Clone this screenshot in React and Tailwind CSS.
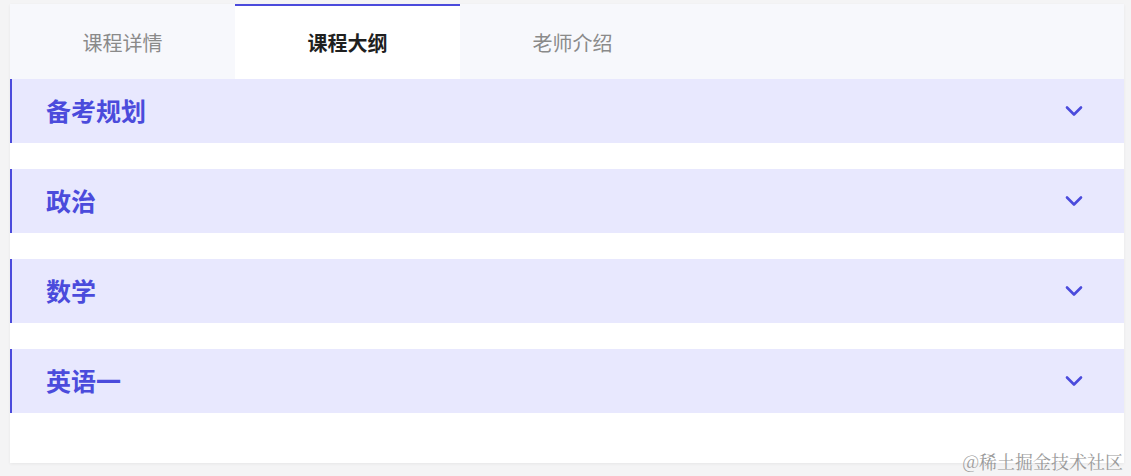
import React, { useState } from 'react'

const tabs = ['课程详情', '课程大纲', '老师介绍']
const sections = ['备考规划', '政治', '数学', '英语一']

function Chevron() {
  return (
    <svg width="18" height="12" viewBox="0 0 18 12" fill="none" stroke="#4b4bdc" strokeWidth="2.6" strokeLinecap="round" strokeLinejoin="round">
      <path d="M2 2.5l7 7 7-7" />
    </svg>
  )
}

export default function App() {
  const [active, setActive] = useState(1)

  return (
    <div
      className="relative w-[1131px] h-[476px] bg-[#f4f4f5] pt-[4px] pl-[10px] overflow-hidden"
      style={{ fontFamily: '"Noto Sans CJK SC", "Noto Sans", sans-serif' }}
    >
      <div className="w-[1114px] h-[459px] bg-white shadow-[0_1px_3px_rgba(0,0,0,0.06)]">
        <div className="flex h-[75px] bg-[#f7f8fc]">
          {tabs.map((t, i) => (
            <button
              key={t}
              onClick={() => setActive(i)}
              className={
                i === active
                  ? 'w-[225px] h-full bg-white border-t-2 border-[#4b4bdc] text-[20px] font-bold text-[#1f1f1f]'
                  : 'w-[225px] h-full border-t-2 border-transparent text-[20px] text-[#8a8a8a]'
              }
            >
              {t}
            </button>
          ))}
        </div>

        <div className="flex flex-col gap-[26px]">
          {sections.map((s) => (
            <div
              key={s}
              className="flex items-center justify-between h-[64px] bg-[#e8e8fe] border-l-2 border-[#4b4bdc] pl-[34px] pr-[41px]"
            >
              <span className="text-[25px] font-bold text-[#4b4bdc]">{s}</span>
              <Chevron />
            </div>
          ))}
        </div>
      </div>

      <div
        className="absolute right-[8px] bottom-[6px] text-[18px] text-[#9a9a9a] leading-none"
        style={{ fontFamily: '"Noto Serif CJK SC", "Noto Sans CJK SC", serif' }}
      >
        @稀土掘金技术社区
      </div>
    </div>
  )
}
